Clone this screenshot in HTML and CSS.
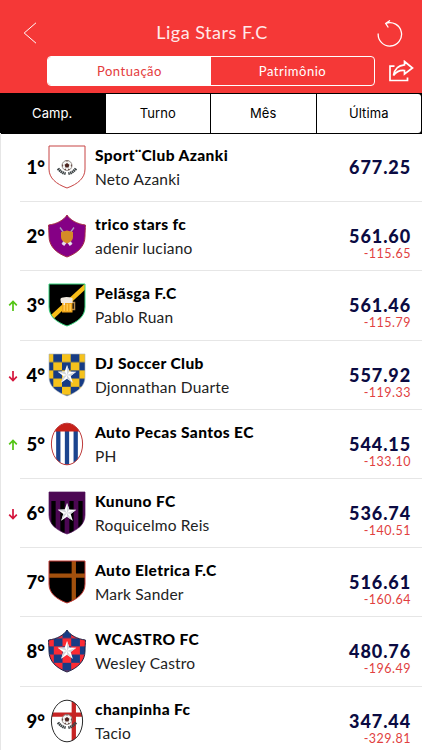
FILE: index.html
```
<!DOCTYPE html>
<html lang="pt-BR">
<head>
  <meta charset="utf-8">
  <title>Liga Stars F.C</title>
  <meta name="viewport" content="width=device-width, initial-scale=1.0">
  <link rel="stylesheet" href="styles.css">
</head>
<body>
  <!-- Shared crest shapes -->
  <svg class="defs" width="0" height="0">
    <defs>
      <path id="shield" d="M1 1H37V24C37 33 30 39 19 43C8 39 1 33 1 24Z"/>
      <path id="badge" d="M19 1C22 6 29 10 37.400 11C37.500 14 37 18 37 22C37 32 30 39 19 43C8 39 1 32 1 22C1 18 .5 14 .6 11C9 10 16 6 19 1Z"/>
      <ellipse id="oval" cx="19" cy="22" rx="15.600" ry="20.800"/>
      <clipPath id="clip-shield"><use href="#shield"/></clipPath>
      <clipPath id="clip-oval"><use href="#oval"/></clipPath>
      <pattern id="checks-gold" x="5.300" y="1" width="17.400" height="16.400" patternUnits="userSpaceOnUse">
        <path fill="#f6c21c" d="M0 0H17.400V16.400H0Z"/>
        <path fill="#173c85" d="M0 0H8.700V8.200H0ZM8.700 8.200H17.400V16.400H8.700Z"/>
      </pattern>
      <pattern id="checks-red" x="5.800" y="1" width="17.400" height="16.400" patternUnits="userSpaceOnUse">
        <path fill="#fb2b34" d="M0 0H17.400V16.400H0Z"/>
        <path fill="#173c85" d="M8.700 0H17.400V8.200H8.700ZM0 8.200H8.700V16.400H0Z"/>
      </pattern>
      <g id="star">
        <path fill="#fff" d="M19 12L21.300 18.600L28.300 18.700L22.700 23L24.800 29.800L19 25.700L13.200 29.800L15.300 23L9.700 18.700L16.700 18.600Z"/>
        <path fill="#d3d7dc" d="M19 12V22L21.300 18.600ZM28.300 18.700L19 22L22.700 23ZM24.800 29.800L19 22V25.700ZM13.200 29.800L19 22L15.300 23ZM9.700 18.700L19 22L16.700 18.600Z"/>
      </g>
      <g id="ball">
        <circle cx="19" cy="20.500" r="5" fill="#f4f4f2" stroke="#8b8580" stroke-width=".9"/>
        <path fill="#4c2520" d="M19 18L21.400 19.800L20.500 22.600H17.500L16.600 19.800ZM17 15.800L19 16.600L21 15.800ZM14.300 19L15.300 20.600L14.300 22ZM23.700 19L22.700 20.600L23.700 22ZM16.200 24.500L17.500 23.600L18 25.200ZM21.800 24.500L20.500 23.600L20 25.200Z"/>
        <path fill="none" stroke="#3d4446" stroke-width="2.800" stroke-dasharray="1.500 .5" d="M10 23.500Q13 27.500 17.700 28.700M28 23.500Q25 27.500 20.300 28.700"/>
      </g>
      <path id="up" d="M5 11V1.500M1.200 5.300L5 1.500L8.800 5.300"/>
      <path id="down" d="M5 1V10.500M1.200 6.700L5 10.500L8.800 6.700"/>
    </defs>
  </svg>

  <header class="topbar">
    <div class="title-row">
      <svg class="back" viewBox="0 0 14 22"><path d="M13 .8L1.200 11L13 21.200"/></svg>
      <h1>Liga Stars F.C</h1>
      <svg class="refresh" viewBox="0 0 26 27"><path d="M1.200 13.500A11.700 11.700 0 1 0 9 3.300M13 .5L8.700 3.400L11.300 7.500"/></svg>
    </div>
    <div class="switch-row">
      <div class="switch">
        <span class="on">Pontuação</span>
        <span>Patrimônio</span>
      </div>
      <svg class="share" viewBox="0 0 26 22"><path d="M6.500 6.200H2V20.500H19.500V17.500M16.500 1.500L24.500 8L16.500 14V10.500C11.500 10 8.300 11.500 5.500 15.500C6.500 9 10 5.300 16.500 4.800Z"/></svg>
    </div>
  </header>

  <nav class="tabs">
    <span class="active">Camp.</span>
    <span>Turno</span>
    <span>Mês</span>
    <span>Última</span>
  </nav>

  <ol class="ranking">
    <li>
      <span class="trend"></span>
      <span class="pos">1°</span>
      <svg class="crest" viewBox="0 0 38 44"><use href="#shield" fill="#fff" stroke="#c74444"/><use href="#ball"/></svg>
      <div class="team"><b>Sport¨Club Azanki</b><span>Neto Azanki</span></div>
      <div class="score"><b>677.25</b></div>
    </li>
    <li>
      <span class="trend"></span>
      <span class="pos">2°</span>
      <svg class="crest" viewBox="0 0 38 44">
        <use href="#badge" fill="#850085" stroke="#a52e48"/>
        <path stroke="#aaa2be" stroke-width="1.300" d="M12 13.500L24 30M26 13.500L14 30"/>
        <path stroke="#e9dff0" stroke-width="3" d="M15 31L18 27M23 31L20 27"/>
        <path fill="#d58b26" d="M13 18L19 16.500L25 18V23Q25 27 19 29.500Q13 27 13 23Z"/>
      </svg>
      <div class="team"><b>trico stars fc</b><span>adenir luciano</span></div>
      <div class="score"><b>561.60</b><span>-115.65</span></div>
    </li>
    <li>
      <svg class="trend up" viewBox="0 0 10 12"><use href="#up"/></svg>
      <span class="pos">3°</span>
      <svg class="crest" viewBox="0 0 38 44">
        <g clip-path="url(#clip-shield)">
          <path d="M0 0H38V44H0Z"/>
          <path stroke="#f8bd18" stroke-width="4.500" d="M2 36L40 1"/>
        </g>
        <use href="#shield" fill="none" stroke="#35d47c"/>
        <path fill="none" stroke="#b58a4c" stroke-width="1.500" d="M24 19.500H26.500V26.500H24"/>
        <path fill="#f0a51d" d="M14 18H24.500V29.500H14Z"/>
        <path fill="#ffc94b" d="M15.500 21H17V28H15.500ZM18.500 21H20V28H18.500ZM21.500 21H23V28H21.500Z"/>
        <path fill="#f0e9df" d="M12.500 17Q12 14.500 15 14.500Q19 13.500 24.500 15V20H17V22H15.500V20H13Z"/>
      </svg>
      <div class="team"><b>Pelãsga F.C</b><span>Pablo Ruan</span></div>
      <div class="score"><b>561.46</b><span>-115.79</span></div>
    </li>
    <li>
      <svg class="trend down" viewBox="0 0 10 12"><use href="#down"/></svg>
      <span class="pos">4°</span>
      <svg class="crest" viewBox="0 0 38 44"><use href="#shield" fill="url(#checks-gold)" stroke="#a9b1ba" stroke-width=".6"/><use href="#star"/></svg>
      <div class="team"><b>DJ Soccer Club</b><span>Djonnathan Duarte</span></div>
      <div class="score"><b>557.92</b><span>-119.33</span></div>
    </li>
    <li>
      <svg class="trend up" viewBox="0 0 10 12"><use href="#up"/></svg>
      <span class="pos">5°</span>
      <svg class="crest" viewBox="0 0 38 44">
        <g clip-path="url(#clip-oval)">
          <path fill="#fff" d="M0 0H38V44H0Z"/>
          <path stroke="#1b448e" stroke-width="4.300" d="M10.300 9V44M19 9V44M27.700 9V44"/>
          <path fill="#c62019" d="M0 0H38V9.500H0Z"/>
        </g>
        <use href="#oval" fill="none" stroke="#bd3939"/>
      </svg>
      <div class="team"><b>Auto Pecas Santos EC</b><span>PH</span></div>
      <div class="score"><b>544.15</b><span>-133.10</span></div>
    </li>
    <li>
      <svg class="trend down" viewBox="0 0 10 12"><use href="#down"/></svg>
      <span class="pos">6°</span>
      <svg class="crest" viewBox="0 0 38 44">
        <g clip-path="url(#clip-shield)">
          <path fill="#4c0753" d="M0 0H38V44H0Z"/>
          <path stroke="#000" stroke-width="4.300" d="M5.500 10V44M14.500 10V44M23.500 10V44M32.500 10V44"/>
        </g>
        <use href="#shield" fill="none" stroke="#50145a" stroke-width=".7"/>
        <use href="#star"/>
      </svg>
      <div class="team"><b>Kununo FC</b><span>Roquicelmo Reis</span></div>
      <div class="score"><b>536.74</b><span>-140.51</span></div>
    </li>
    <li>
      <span class="trend"></span>
      <span class="pos">7°</span>
      <svg class="crest" viewBox="0 0 38 44">
        <g clip-path="url(#clip-shield)">
          <path d="M0 0H38V44H0Z"/>
          <path stroke="#a2500d" stroke-width="4.300" d="M0 15.700H38M25.800 0V44"/>
        </g>
        <use href="#shield" fill="none" stroke="#c33a32"/>
      </svg>
      <div class="team"><b>Auto Eletrica F.C</b><span>Mark Sander</span></div>
      <div class="score"><b>516.61</b><span>-160.64</span></div>
    </li>
    <li>
      <span class="trend"></span>
      <span class="pos">8°</span>
      <svg class="crest" viewBox="0 0 38 44"><use href="#badge" fill="url(#checks-red)" stroke="#1d2449"/><use href="#star"/></svg>
      <div class="team"><b>WCASTRO FC</b><span>Wesley Castro</span></div>
      <div class="score"><b>480.76</b><span>-196.49</span></div>
    </li>
    <li>
      <span class="trend"></span>
      <span class="pos">9°</span>
      <svg class="crest" viewBox="0 0 38 44">
        <g clip-path="url(#clip-oval)">
          <path fill="#fff" d="M0 0H38V44H0Z"/>
          <path stroke="#c62424" stroke-width="4.300" d="M0 15.700H38M25.800 0V44"/>
        </g>
        <use href="#oval" fill="none" stroke="#282828"/>
        <use href="#ball"/>
      </svg>
      <div class="team"><b>chanpinha Fc</b><span>Tacio</span></div>
      <div class="score"><b>347.44</b><span>-329.81</span></div>
    </li>
  </ol>
</body>
</html>
```
FILE: styles.css
```
* {
  box-sizing: border-box;
}
body {
  margin: 0;
  height: 750px;
  overflow: hidden;
  background: #fff;
  color: #000;
  font-family: Lato, "Open Sans", sans-serif;
}
.defs {
  position: absolute;
}
.topbar {
  height: 93px;
  background: #f53837;
  color: #fff;
  padding: 20px 8px 0 23px;
}
.title-row {
  display: flex;
  align-items: center;
  justify-content: space-between;
  height: 26px;
  padding-right: 11px;
}
h1 {
  margin: -2px 0 0 10px;
  color: #ffe9e9;
  font-size: 18px;
  font-weight: 400;
  letter-spacing: 0.5px;
}
.topbar svg {
  fill: none;
  stroke: #fff;
}
.back {
  width: 14px;
  height: 22px;
}
.refresh {
  width: 26px;
  height: 27px;
  stroke-width: 1.3;
}
.switch-row {
  display: flex;
  align-items: center;
  justify-content: space-between;
  margin-top: 10px;
  padding-left: 24px;
}
.switch {
  display: flex;
  width: 328px;
  height: 30px;
  border: 1px solid #fff;
  border-radius: 4px;
  overflow: hidden;
}
.switch span {
  flex: 1;
  text-align: center;
  font-size: 13px;
  line-height: 28px;
  letter-spacing: 0.5px;
}
.switch .on {
  background: #fff;
  color: #e43b3b;
}
.share {
  width: 26px;
  height: 22px;
  stroke-width: 1.7;
}
.tabs {
  display: grid;
  grid-template-columns: repeat(4, 1fr);
  gap: 1px;
  height: 41px;
  padding: 1px 1px 1px 0;
  background: #000;
}
.tabs span {
  background: #fff;
  text-align: center;
  font: 13px/39px Inter, sans-serif;
  letter-spacing: 0.1px;
}
.tabs .active {
  background: #000;
  color: #fff;
}
.tabs span:last-child {
  border-radius: 0 3px 3px 0;
}
.ranking {
  list-style: none;
  margin: -1px 0 0;
  padding: 0;
  border-left: 1px solid #e6e6e6;
}
.ranking li {
  display: flex;
  height: 69.2px;
  padding: 0 11px 0 8px;
  background: linear-gradient(#e6e6e6, #e6e6e6) 19px 100% / 100% 1px no-repeat;
}
.trend {
  width: 10px;
  height: 12px;
  margin: 29px 1px 0 -1px;
  fill: none;
  stroke-width: 1.7;
}
.up {
  stroke: #53c514;
}
.down {
  stroke: #d5143b;
}
.pos {
  width: 26px;
  margin-top: 22px;
  text-align: right;
  font-size: 18.5px;
  font-weight: 900;
  line-height: 24px;
}
.crest {
  width: 38px;
  height: 44px;
  margin: 12px 0 0 3px;
}
.team {
  flex: 1;
  padding: 11px 0 0 9px;
}
.team b {
  display: block;
  font-size: 15.5px;
  font-weight: 900;
  line-height: 22px;
  letter-spacing: 0.4px;
}
.team span {
  display: block;
  margin-top: 2px;
  color: #222;
  font-size: 15.5px;
  line-height: 22px;
  letter-spacing: 0.2px;
}
.score {
  padding-top: 25px;
  text-align: right;
}
.score b {
  display: block;
  color: #0b0b42;
  font-size: 18px;
  font-weight: 900;
  line-height: 18px;
  letter-spacing: 0.9px;
}
.score span {
  display: block;
  color: #e13f3f;
  font-size: 12.5px;
  line-height: 17px;
  letter-spacing: 0.5px;
}
```
